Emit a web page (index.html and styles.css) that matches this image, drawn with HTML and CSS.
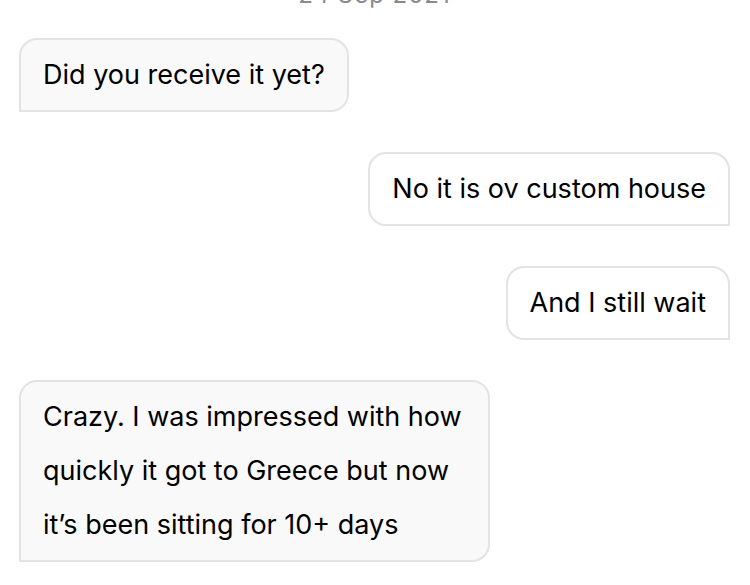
FILE: index.html
```html
<!DOCTYPE html>
<html lang="en">
<head>
<meta charset="utf-8">
<title>Chat</title>
<link rel="stylesheet" href="styles.css">
</head>
<body>
<div class="chat">
  <div class="date">24 Sep 2021</div>
  <div class="msg in">Did you receive it yet?</div>
  <div class="msg out">No it is ov custom house</div>
  <div class="msg out">And I still wait</div>
  <div class="msg in long">Crazy. I was impressed with how quickly it got to Greece but now it’s been sitting for 10+ days</div>
</div>
</body>
</html>
```

FILE: styles.css
```css
html, body {
  margin: 0;
  padding: 0;
  background: #ffffff;
}
body {
  width: 750px;
  height: 585px;
  overflow: hidden;
  font-family: Inter, "Liberation Sans", sans-serif;
  color: #000000;
}
.chat {
  display: flex;
  flex-direction: column;
  gap: 40px;
  padding: 0 20px 0 19px;
}
.date {
  align-self: center;
  font-size: 24px;
  line-height: 24px;
  color: #8a8a8e;
  margin-top: -17px;
  margin-bottom: -9px;
  letter-spacing: 1px;
}
.msg {
  font-size: 27px;
  line-height: 54px;
  padding: 8px 22px 8px 22px;
  border: 2px solid #e3e3e3;
  border-radius: 18px;
  max-width: 426px;
}
.in {
  align-self: flex-start;
  background: #f9f9f9;
  border-bottom-left-radius: 0;
}
.out {
  align-self: flex-end;
  background: #ffffff;
  border-bottom-right-radius: 0;
}
.long {
  width: 423px;
}
```
